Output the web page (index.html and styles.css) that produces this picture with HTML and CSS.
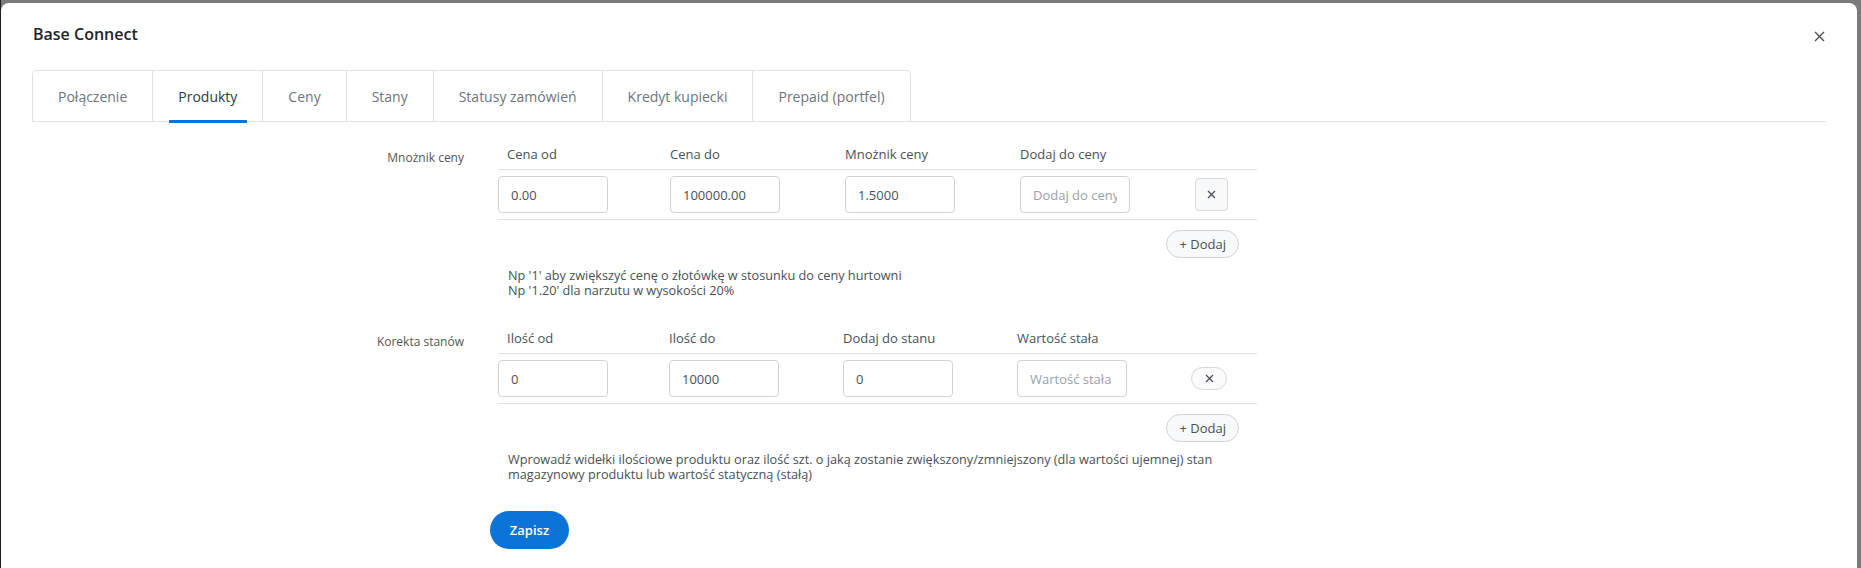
FILE: index.html
```html
<!DOCTYPE html>
<html lang="pl">
<head>
    <meta charset="UTF-8">
    <meta name="viewport" content="width=device-width, initial-scale=1.0">
    <title>Base Connect</title>
    <link rel="stylesheet" href="styles.css">
</head>
<body>
    <div class="modal">
        <div class="modal-header">
            <h2 class="modal-title">Base Connect</h2>
            <button class="close-btn" type="button" aria-label="Zamknij">
                <svg width="11" height="11" viewBox="0 0 11 11"><path d="M1 1L10 10M10 1L1 10" stroke="#495057" stroke-width="1.4" fill="none"/></svg>
            </button>
        </div>

        <div class="modal-body">
            <ul class="tabs">
                <li class="tab">Połączenie</li>
                <li class="tab active">Produkty</li>
                <li class="tab">Ceny</li>
                <li class="tab">Stany</li>
                <li class="tab">Statusy zamówień</li>
                <li class="tab">Kredyt kupiecki</li>
                <li class="tab">Prepaid (portfel)</li>
            </ul>

            <form class="settings">
                <!-- mnożnik ceny -->
                <div class="form-row">
                    <label class="row-label">Mnożnik ceny</label>
                    <div class="row-field">
                        <div class="range-table">
                            <div class="range-head">
                                <span>Cena od</span>
                                <span>Cena do</span>
                                <span>Mnożnik ceny</span>
                                <span>Dodaj do ceny</span>
                                <span></span>
                            </div>
                            <div class="range-row">
                                <input class="form-input" type="text" value="0.00">
                                <input class="form-input" type="text" value="100000.00">
                                <input class="form-input" type="text" value="1.5000">
                                <input class="form-input" type="text" placeholder="Dodaj do ceny">
                                <button class="remove-btn" type="button">
                                    <svg width="9" height="9" viewBox="0 0 9 9"><path d="M1 1L8 8M8 1L1 8" stroke="#495057" stroke-width="1.3" fill="none"/></svg>
                                </button>
                            </div>
                        </div>
                        <div class="add-line"><button class="add-btn" type="button">+ Dodaj</button></div>
                        <p class="hint">Np '1' aby zwiększyć cenę o złotówkę w stosunku do ceny hurtowni<br>Np '1.20' dla narzutu w wysokości 20%</p>
                    </div>
                </div>

                <!-- korekta stanów -->
                <div class="form-row">
                    <label class="row-label">Korekta stanów</label>
                    <div class="row-field">
                        <div class="range-table stock">
                            <div class="range-head">
                                <span>Ilość od</span>
                                <span>Ilość do</span>
                                <span>Dodaj do stanu</span>
                                <span>Wartość stała</span>
                                <span></span>
                            </div>
                            <div class="range-row">
                                <input class="form-input" type="text" value="0">
                                <input class="form-input" type="text" value="10000">
                                <input class="form-input" type="text" value="0">
                                <input class="form-input" type="text" placeholder="Wartość stała">
                                <button class="remove-btn pill" type="button">
                                    <svg width="9" height="9" viewBox="0 0 9 9"><path d="M1 1L8 8M8 1L1 8" stroke="#495057" stroke-width="1.3" fill="none"/></svg>
                                </button>
                            </div>
                        </div>
                        <div class="add-line"><button class="add-btn" type="button">+ Dodaj</button></div>
                        <p class="hint">Wprowadź widełki ilościowe produktu oraz ilość szt. o jaką zostanie zwiększony/zmniejszony (dla wartości ujemnej) stan magazynowy produktu lub wartość statyczną (stałą)</p>
                    </div>
                </div>

                <div class="form-actions">
                    <button class="save-btn" type="submit">Zapisz</button>
                </div>
            </form>
        </div>
    </div>
</body>
</html>
```

FILE: styles.css
```css
* {
    box-sizing: border-box;
}
html, body {
    margin: 0;
    height: 100%;
    overflow: hidden;
}
body {
    background: #7b7b7b;
    border-left: 1px solid #1f1f1f;
    font-family: "Open Sans", Arial, sans-serif;
    color: #495057;
}
.modal {
    background: white;
    margin: 3px 4px 0 0;
    border-radius: 8px 8px 0 0;
    min-height: 620px;
}
.modal-header {
    display: flex;
    justify-content: space-between;
    align-items: center;
    padding: 20px 32px 0 32px;
}
.modal-title {
    margin: 0;
    font-size: 16px;
    line-height: 22px;
    font-weight: 600;
    color: #212529;
}
.close-btn {
    background: none;
    border: none;
    padding: 0;
    width: 11px;
    height: 11px;
    margin-top: 4px;
    cursor: pointer;
    display: flex;
}
.modal-body {
    padding: 25px 31px 0 31px;
}

/* zakładki */
.tabs {
    display: flex;
    list-style: none;
    margin: 0;
    padding: 0;
    border-bottom: 1px solid #dee2e6;
}
.tab {
    position: relative;
    height: 51px;
    line-height: 51px;
    padding: 0 25px;
    font-size: 14px;
    color: #6c757d;
    border-top: 1px solid #dee2e6;
    border-left: 1px solid #dee2e6;
    cursor: pointer;
}
.tab:first-child {
    border-top-left-radius: 5px;
}
.tab:last-child {
    border-right: 1px solid #dee2e6;
    border-top-right-radius: 5px;
}
.tab.active {
    color: #343a40;
}
.tab.active::after {
    content: "";
    position: absolute;
    left: 16px;
    right: 15px;
    bottom: -2px;
    height: 3px;
    background: #0a74da;
}

/* formularz */
.settings {
    padding-top: 23px;
}
.form-row {
    display: grid;
    grid-template-columns: 432px 759px;
    column-gap: 34px;
    margin-bottom: 31px;
}
.row-label {
    text-align: right;
    font-size: 12px;
    line-height: 18px;
    padding-top: 4px;
    color: #555;
}
.range-table {
    --cols: 172px 175px 175px 175px 1fr;
}
.range-table.stock {
    --cols: 171px 174px 174px 174px 1fr;
}
.range-head,
.range-row {
    display: grid;
    grid-template-columns: var(--cols);
    border-bottom: 1px solid #dee2e6;
}
.range-head {
    font-size: 13px;
    line-height: 18px;
    padding-bottom: 6px;
    color: #495057;
}
.range-head span:first-child {
    padding-left: 9px;
}
.range-row {
    align-items: center;
    padding: 6px 0;
}
.form-input {
    width: 110px;
    height: 37px;
    border: 1px solid #ced4da;
    border-radius: 4px;
    padding: 0 12px;
    font-family: inherit;
    font-size: 13px;
    color: #495057;
}
.form-input::placeholder {
    color: #9aa1a8;
}
.remove-btn {
    width: 33px;
    height: 33px;
    display: flex;
    align-items: center;
    justify-content: center;
    padding: 0;
    background: #f8f9fa;
    border: 1px solid #d6d9dc;
    border-radius: 4px;
    cursor: pointer;
}
.remove-btn.pill {
    width: 36px;
    height: 23px;
    border-radius: 12px;
    background: #fbfbfc;
}
.add-line {
    display: flex;
    justify-content: flex-end;
    padding-right: 18px;
    margin-top: 10px;
}
.add-btn {
    height: 28px;
    padding: 0 12px;
    border: 1px solid #d0d4d8;
    border-radius: 14px;
    background: #f8f9fa;
    font-family: inherit;
    font-size: 13px;
    color: #495057;
    cursor: pointer;
}
.hint {
    margin: 10px 0 0 10px;
    font-size: 12.7px;
    line-height: 15px;
    color: #495057;
}
.form-actions {
    padding-left: 458px;
    margin-top: -2px;
}
.save-btn {
    width: 79px;
    height: 38px;
    border: none;
    border-radius: 19px;
    background: #0c74d9;
    color: white;
    font-family: inherit;
    font-size: 13px;
    font-weight: 600;
    cursor: pointer;
}
```
